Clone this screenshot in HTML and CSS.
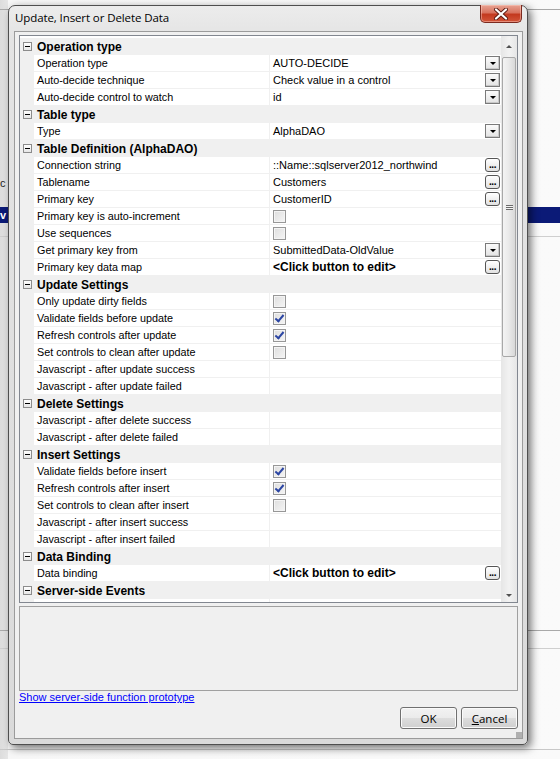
FILE: index.html
```html
<!DOCTYPE html>
<html>
<head>
<meta charset="utf-8">
<link rel="stylesheet" href="styles.css">
</head>
<body>
<div class="desktop">
  <div class="behind">
    <div class="behind-line l1"></div>
    <div class="behind-line l2"></div>
    <div class="behind-c">c</div>
    <div class="behind-sel"><span>v</span></div>
    <div class="behind-line l3"></div>
    <div class="behind-line l4"></div>
    <div class="behind-line l5"></div>
  </div>

  <div class="window">
    <div class="titlebar">
      <span class="title">Update, Insert or Delete Data</span>
      <div class="close">
        <svg width="16" height="12" viewBox="0 0 16 12"><path d="M3 1.5 L13 10.5 M13 1.5 L3 10.5" stroke="#5a1a12" stroke-width="4" stroke-linecap="round"/><path d="M3 1.5 L13 10.5 M13 1.5 L3 10.5" stroke="#ffffff" stroke-width="2.2" stroke-linecap="round"/></svg>
      </div>
    </div>

    <div class="client">
      <div class="grid">
        <div class="rows">
          <div class="cat"><span class="minus"></span>Operation type</div>
          <div class="row"><div class="gut"></div><div class="lbl">Operation type</div><div class="val">AUTO-DECIDE<span class="dd"></span></div></div>
          <div class="row"><div class="gut"></div><div class="lbl">Auto-decide technique</div><div class="val">Check value in a control<span class="dd"></span></div></div>
          <div class="row"><div class="gut"></div><div class="lbl">Auto-decide control to watch</div><div class="val">id<span class="dd"></span></div></div>

          <div class="cat"><span class="minus"></span>Table type</div>
          <div class="row"><div class="gut"></div><div class="lbl">Type</div><div class="val">AlphaDAO<span class="dd"></span></div></div>

          <div class="cat"><span class="minus"></span>Table Definition (AlphaDAO)</div>
          <div class="row"><div class="gut"></div><div class="lbl">Connection string</div><div class="val">::Name::sqlserver2012_northwind<span class="el">...</span></div></div>
          <div class="row"><div class="gut"></div><div class="lbl">Tablename</div><div class="val">Customers<span class="el">...</span></div></div>
          <div class="row"><div class="gut"></div><div class="lbl">Primary key</div><div class="val">CustomerID<span class="el">...</span></div></div>
          <div class="row"><div class="gut"></div><div class="lbl">Primary key is auto-increment</div><div class="val"><span class="cb"></span></div></div>
          <div class="row"><div class="gut"></div><div class="lbl">Use sequences</div><div class="val"><span class="cb"></span></div></div>
          <div class="row"><div class="gut"></div><div class="lbl">Get primary key from</div><div class="val">SubmittedData-OldValue<span class="dd"></span></div></div>
          <div class="row"><div class="gut"></div><div class="lbl">Primary key data map</div><div class="val bold">&lt;Click button to edit&gt;<span class="el">...</span></div></div>

          <div class="cat"><span class="minus"></span>Update Settings</div>
          <div class="row"><div class="gut"></div><div class="lbl">Only update dirty fields</div><div class="val"><span class="cb"></span></div></div>
          <div class="row"><div class="gut"></div><div class="lbl">Validate fields before update</div><div class="val"><span class="cb on"></span></div></div>
          <div class="row"><div class="gut"></div><div class="lbl">Refresh controls after update</div><div class="val"><span class="cb on"></span></div></div>
          <div class="row"><div class="gut"></div><div class="lbl">Set controls to clean after update</div><div class="val"><span class="cb"></span></div></div>
          <div class="row"><div class="gut"></div><div class="lbl">Javascript - after update success</div><div class="val"></div></div>
          <div class="row"><div class="gut"></div><div class="lbl">Javascript - after update failed</div><div class="val"></div></div>

          <div class="cat"><span class="minus"></span>Delete Settings</div>
          <div class="row"><div class="gut"></div><div class="lbl">Javascript - after delete success</div><div class="val"></div></div>
          <div class="row"><div class="gut"></div><div class="lbl">Javascript - after delete failed</div><div class="val"></div></div>

          <div class="cat"><span class="minus"></span>Insert Settings</div>
          <div class="row"><div class="gut"></div><div class="lbl">Validate fields before insert</div><div class="val"><span class="cb on"></span></div></div>
          <div class="row"><div class="gut"></div><div class="lbl">Refresh controls after insert</div><div class="val"><span class="cb on"></span></div></div>
          <div class="row"><div class="gut"></div><div class="lbl">Set controls to clean after insert</div><div class="val"><span class="cb"></span></div></div>
          <div class="row"><div class="gut"></div><div class="lbl">Javascript - after insert success</div><div class="val"></div></div>
          <div class="row"><div class="gut"></div><div class="lbl">Javascript - after insert failed</div><div class="val"></div></div>

          <div class="cat"><span class="minus"></span>Data Binding</div>
          <div class="row"><div class="gut"></div><div class="lbl">Data binding</div><div class="val bold">&lt;Click button to edit&gt;<span class="el">...</span></div></div>

          <div class="cat"><span class="minus"></span>Server-side Events</div>
          <div class="row"><div class="gut"></div><div class="lbl">Ajax Callback - server-side event</div><div class="val"></div></div>
        </div>
        <div class="scrollbar">
          <div class="sb-btn"><span class="arr up"></span></div>
          <div class="sb-track">
            <div class="thumb"><span class="grip"></span></div>
          </div>
          <div class="sb-btn"><span class="arr down"></span></div>
        </div>
      </div>

      <div class="desc"></div>

      <a class="link" href="#">Show server-side function prototype</a>

      <div class="buttons">
        <button class="btn">OK</button>
        <button class="btn"><u>C</u>ancel</button>
      </div>
      <div class="grip-corner"></div>
    </div>
  </div>
</div>
</body>
</html>
```

FILE: styles.css
```css
html, body {
  margin: 0;
  padding: 0;
}

body {
  width: 560px;
  height: 759px;
  overflow: hidden;
  background: #f3f3f3;
  font-family: "Liberation Sans", Arial, sans-serif;
  font-size: 11px;
  color: #000;
}

.desktop {
  position: relative;
  width: 560px;
  height: 759px;
  background: linear-gradient(90deg, #dcdcdc 0, #e6e6e6 8px, #f7f7f7 8px, #fafafa 100%);
}

/* content of the application behind the dialog */
.behind {
  position: absolute;
  inset: 0;
}

.behind-line {
  position: absolute;
  left: 0;
  right: 0;
  height: 1px;
  background: #a9a9a9;
}

.l1 { top: 9px; }
.l2 { top: 236px; background: #cfcfcf; }
.l3 { top: 630px; }
.l4 { top: 648px; background: #cfcfcf; }
.l5 { top: 749px; background: #c8c8c8; }

.behind-c {
  position: absolute;
  left: 0;
  top: 177px;
  font-size: 11px;
  color: #222;
}

.behind-sel {
  position: absolute;
  left: 0;
  right: 0;
  top: 207px;
  height: 16px;
  background: #0b1a77;
  color: #fff;
  font-weight: bold;
  font-size: 11px;
  line-height: 16px;
}

/* dialog window */
.window {
  position: absolute;
  left: 8px;
  top: 5px;
  width: 520px;
  height: 740px;
  box-sizing: border-box;
  border: 1px solid #4f4f4f;
  border-radius: 7px 7px 5px 5px;
  background: linear-gradient(180deg, #ececec 0, #e4e4e4 30px, #dadada 100%);
  box-shadow: 3px 3px 9px rgba(0, 0, 0, 0.55);
  padding: 0 4px 5px 5px;
  display: flex;
  flex-direction: column;
}

.titlebar {
  height: 25px;
  display: flex;
  align-items: flex-start;
  justify-content: space-between;
  flex: none;
}

.title {
  font-family: "Open Sans", "Noto Sans", sans-serif;
  font-size: 11.5px;
  color: #000;
  padding-left: 1px;
  padding-top: 4px;
  line-height: 16px;
  letter-spacing: -0.1px;
}

.close {
  width: 42px;
  height: 18px;
  margin-top: -1px;
  margin-right: 1px;
  box-sizing: border-box;
  border: 1px solid #7b2a1f;
  border-top: none;
  border-radius: 0 0 5px 5px;
  background: linear-gradient(180deg, #e8a393 0, #d8735f 45%, #c3391f 55%, #d2553a 100%);
  box-shadow: inset 0 0 0 1px rgba(255, 210, 200, 0.45);
  display: flex;
  align-items: center;
  justify-content: center;
}

.client {
  position: relative;
  flex: 1;
  border: 1px solid #9b9b9b;
  background: #f0f0f0;
  padding: 3px 4px 0 4px;
  display: flex;
  flex-direction: column;
}

/* property grid */
.grid {
  height: 568px;
  box-sizing: border-box;
  border: 1px solid #828790;
  background: #fff;
  display: flex;
  flex: none;
}

.rows {
  flex: 1;
  overflow: hidden;
  padding-top: 2px;
  background: #fff;
}

.cat {
  height: 17px;
  background: #f0f0f0;
  display: flex;
  align-items: center;
  font-weight: bold;
  font-size: 12px;
  box-sizing: border-box;
}

.minus {
  width: 9px;
  height: 9px;
  box-sizing: border-box;
  border: 1px solid #8c8c8c;
  background: linear-gradient(#ffffff, #e6e6e6);
  margin: 0 5px 0 3px;
  position: relative;
}

.minus::after {
  content: "";
  position: absolute;
  left: 1px;
  top: 3px;
  width: 5px;
  height: 1px;
  background: #000;
}

.row {
  height: 17px;
  display: flex;
}

.gut {
  width: 14px;
  background: #f0f0f0;
  flex: none;
}

.lbl {
  width: 236px;
  flex: none;
  box-sizing: border-box;
  padding-left: 3px;
  border-bottom: 1px solid #f0f0f0;
  border-right: 1px solid #f0f0f0;
  line-height: 16px;
  white-space: nowrap;
  overflow: hidden;
  font-size: 10.8px;
}

.val {
  flex: 1;
  box-sizing: border-box;
  padding-left: 3px;
  border-bottom: 1px solid #f0f0f0;
  line-height: 16px;
  white-space: nowrap;
  display: flex;
  align-items: center;
  position: relative;
}

.val.bold {
  font-weight: bold;
  font-size: 12px;
}

.dd {
  position: absolute;
  right: 1px;
  top: 1px;
  width: 15px;
  height: 14px;
  box-sizing: border-box;
  border: 1px solid #7a7a7a;
  background: linear-gradient(#fbfbfb, #e3e3e3);
  box-shadow: inset -1px -1px 0 #c8c8c8;
}

.dd::after {
  content: "";
  position: absolute;
  left: 4px;
  top: 5px;
  border-left: 3px solid transparent;
  border-right: 3px solid transparent;
  border-top: 3px solid #000;
}

.el {
  position: absolute;
  right: 1px;
  top: 1px;
  width: 15px;
  height: 14px;
  box-sizing: border-box;
  border: 1px solid #555;
  border-radius: 3px;
  background: linear-gradient(#ffffff, #e1e1e1);
  font-weight: bold;
  font-size: 10px;
  line-height: 12px;
  text-align: center;
  letter-spacing: -0.5px;
  color: #000;
}

.cb {
  width: 13px;
  height: 13px;
  box-sizing: border-box;
  border: 1px solid #979797;
  background: linear-gradient(135deg, #dedede, #f5f5f5);
  box-shadow: inset 0 0 0 1px #f4f4f4;
  position: relative;
}

.cb.on::after {
  content: "";
  position: absolute;
  left: 3px;
  top: 0px;
  width: 3px;
  height: 7px;
  border-right: 2px solid #2b45a3;
  border-bottom: 2px solid #2b45a3;
  transform: rotate(40deg);
}

/* scrollbar */
.scrollbar {
  width: 16px;
  flex: none;
  background: linear-gradient(90deg, #e6e6e6, #f2f2f2 50%, #e6e6e6);
  display: flex;
  flex-direction: column;
}

.sb-btn {
  height: 17px;
  display: flex;
  align-items: center;
  justify-content: center;
  flex: none;
}

.arr {
  width: 0;
  height: 0;
  border-left: 3px solid transparent;
  border-right: 3px solid transparent;
}

.arr.up {
  border-bottom: 3px solid #505050;
  margin-top: 4px;
}

.arr.down {
  border-top: 3px solid #505050;
  margin-top: 4px;
}

.sb-track {
  flex: 1;
  padding-top: 4px;
}

.thumb {
  margin: 0 1px;
  height: 300px;
  box-sizing: border-box;
  border: 1px solid #a8a8a8;
  border-radius: 2px;
  background: linear-gradient(90deg, #f4f4f4, #e9e9e9 50%, #d8d8d8);
  display: flex;
  align-items: center;
  justify-content: center;
}

.grip {
  width: 7px;
  height: 5px;
  background: repeating-linear-gradient(180deg, #6a6a6a 0, #6a6a6a 1px, #f3f3f3 1px, #f3f3f3 2px);
}

.desc {
  margin-top: 3px;
  height: 85px;
  box-sizing: border-box;
  border: 1px solid #a0a0a0;
  background: #f0f0f0;
  flex: none;
}

.link {
  align-self: flex-start;
  margin-top: 0px;
  line-height: 13px;
  color: #0000ff;
  text-decoration: underline;
  font-size: 11px;
}

.buttons {
  display: flex;
  justify-content: flex-end;
  gap: 4px;
  margin-top: 3px;
}

.btn {
  width: 57px;
  height: 22px;
  box-sizing: border-box;
  border: 1px solid #707070;
  border-radius: 3px;
  background: linear-gradient(180deg, #f2f2f2 0, #ebebeb 49%, #dddddd 51%, #cfcfcf 100%);
  box-shadow: inset 0 0 0 1px #fafafa;
  font-family: "Open Sans", "Noto Sans", sans-serif;
  font-size: 11.5px;
  color: #000;
  padding: 0;
}

.grip-corner {
  position: absolute;
  right: 0;
  bottom: 0;
  width: 6px;
  height: 6px;
  background: radial-gradient(circle, #b0b0b0 0.8px, transparent 1px) 0 0 / 2px 2px;
}
```
